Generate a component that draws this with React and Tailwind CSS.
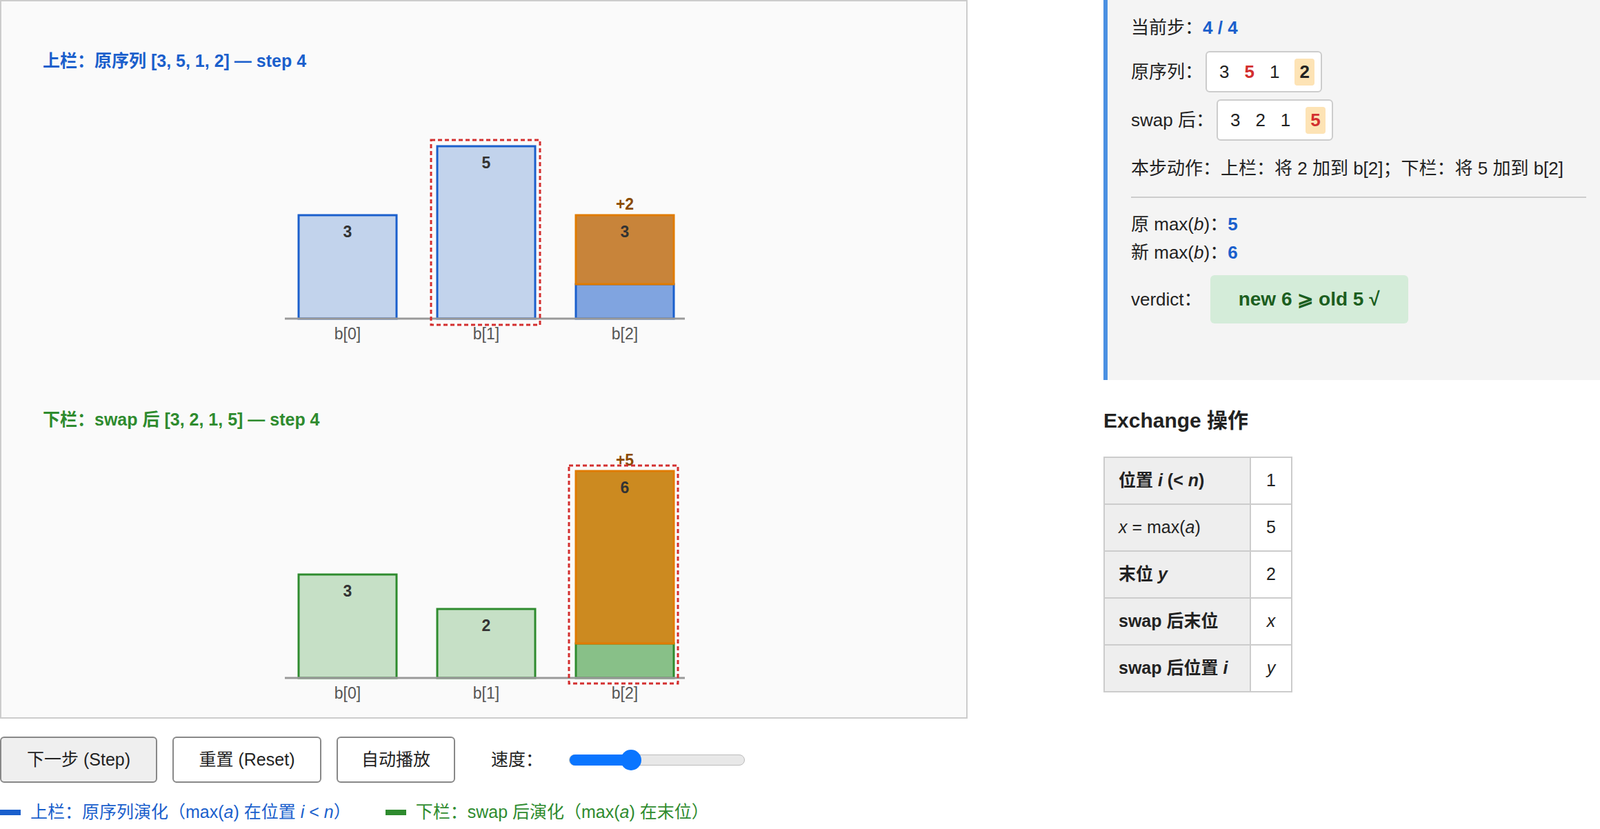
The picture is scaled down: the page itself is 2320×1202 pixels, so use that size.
import React from "react";

const sans = { fontFamily: '"Liberation Sans", "Noto Sans CJK SC", sans-serif' };
const M = ({ children }) => <span className="font-['Liberation_Serif'] italic">{children}</span>;
const R = ({ children }) => <span className="font-['Liberation_Serif']">{children}</span>;

const U = 50;

const Chart = ({ axisY, bars, highlight }) => (
  <svg width="1400" height={axisY + 50} className="block">
    {bars.map((b, i) => {
      const x = 431 + i * 201;
      const base = b.base * U;
      const add = (b.add || 0) * U;
      const top = axisY - base - add;
      return (
        <g key={i}>
          <rect x={x} y={axisY - base} width="142" height={base} fill={b.add ? b.dark : b.fill} stroke={b.stroke} strokeWidth="3" />
          {b.add ? (
            <rect x={x} y={top} width="142" height={add} fill={b.addFill} stroke="#e07b00" strokeWidth="3" />
          ) : null}
          <text x={x + 71} y={top + 32} textAnchor="middle" fontSize="23" fontWeight="bold" fill="#333" style={sans}>{b.label}</text>
          {b.add ? (
            <text x={x + 71} y={top - 8} textAnchor="middle" fontSize="23" fontWeight="bold" fill="#8a4a00" style={sans}>+{b.add}</text>
          ) : null}
          <text x={x + 71} y={axisY + 30} textAnchor="middle" fontSize="23" fill="#555" style={sans}>b[{i}]</text>
        </g>
      );
    })}
    <line x1="411" x2="991" y1={axisY} y2={axisY} stroke="#999" strokeWidth="3" />
    <rect x={highlight.x} y={highlight.y} width={highlight.w} height={highlight.h} fill="none" stroke="#d32f2f" strokeWidth="3" strokeDasharray="6 4" />
  </svg>
);

export default function App() {
  const blue = { fill: "#c2d3ec", stroke: "#1a5fcc", dark: "#80a4e0" };
  const green = { fill: "#c6e0c6", stroke: "#2e8b2e", dark: "#88c088" };
  return (
    <div className="w-[2320px] h-[1202px] bg-white text-[#222] flex" style={sans}>
      <div className="w-[1403px] flex flex-col">
        <div className="h-[1042px] border-2 border-[#ccc] bg-[#fafafa] flex flex-col">
          <div className="h-[130px] pl-[60px] pt-[68px] text-[25px] font-bold text-[#1a5fcc]">上栏：原序列 [3, 5, 1, 2] — step 4</div>
          <Chart axisY={330} bars={[{ ...blue, base: 3, label: 3 }, { ...blue, base: 5, label: 5 }, { ...blue, base: 1, add: 2, addFill: "#c8843a", label: 3 }]} highlight={{ x: 623, y: 71, w: 158, h: 268 }} />
          <div className="h-[130px] pl-[60px] pt-[78px] text-[25px] font-bold text-[#2e8b2e]">下栏：swap 后 [3, 2, 1, 5] — step 4</div>
          <Chart axisY={341} bars={[{ ...green, base: 3, label: 3 }, { ...green, base: 2, label: 2 }, { ...green, base: 1, add: 5, addFill: "#cc8a20", label: 6 }]} highlight={{ x: 823, y: 33, w: 158, h: 316 }} />
        </div>
        <div className="flex items-center gap-[22px] mt-[26px] text-[25px]">
          <button className="w-[228px] h-[67px] rounded-[6px] border-2 border-[#888] bg-[#efefef]">下一步 (Step)</button>
          <button className="w-[216px] h-[67px] rounded-[6px] border-2 border-[#888] bg-white">重置 (Reset)</button>
          <button className="w-[172px] h-[67px] rounded-[6px] border-2 border-[#888] bg-white">自动播放</button>
          <span className="ml-[30px]">速度：</span>
          <div className="ml-[16px] relative w-[255px] h-[16px] rounded-full bg-[#e8e8e8] border border-[#bbb]">
            <div className="absolute left-0 top-[-1px] h-[16px] w-[90px] rounded-full bg-[#0a75ff]" />
            <div className="absolute left-[74px] top-[-8px] w-[30px] h-[30px] rounded-full bg-[#0a75ff]" />
          </div>
        </div>
        <div className="flex items-center mt-[24px] text-[25px]">
          <span className="w-[30px] h-[8px] bg-[#1a5fcc]" />
          <span className="ml-[14px] text-[#1a5fcc]">上栏：原序列演化（<R>max</R>(<M>a</M>) 在位置 <M>i</M> &lt; <M>n</M>）</span>
          <span className="ml-[50px] w-[30px] h-[8px] bg-[#2e8b2e]" />
          <span className="ml-[14px] text-[#2e8b2e]">下栏：swap 后演化（<R>max</R>(<M>a</M>) 在末位）</span>
        </div>
      </div>
      <div className="ml-[197px] flex-1 flex flex-col">
        <div className="h-[551px] bg-[#f4f4f4] border-l-[6px] border-[#4a90e2] pl-[34px] pr-[20px] pt-[20px] text-[26px]">
          <div className="h-[40px] flex items-center">当前步：<span className="text-[#1a5fcc] font-bold">4 / 4</span></div>
          <div className="mt-[14px] flex items-center">原序列：
            <span className="ml-[4px] h-[60px] w-[169px] flex items-center gap-[22px] px-[18px] bg-white border-2 border-[#ccc] rounded-[6px]">
              <span>3</span><span className="text-[#d32f2f] font-bold">5</span><span>1</span><span className="bg-[#fde3b5] font-bold px-[7px] rounded">2</span>
            </span>
          </div>
          <div className="mt-[10px] flex items-center">swap 后：
            <span className="ml-[4px] h-[60px] w-[169px] flex items-center gap-[22px] px-[18px] bg-white border-2 border-[#ccc] rounded-[6px]">
              <span>3</span><span>2</span><span>1</span><span className="bg-[#fde3b5] text-[#d32f2f] font-bold px-[7px] rounded">5</span>
            </span>
          </div>
          <div className="mt-[20px] leading-[41px] pr-[20px]">本步动作：上栏：将 2 加到 b[2]；下栏：将 5 加到 b[2]</div>
          <div className="mt-[20px] h-[2px] bg-[#ccc]" />
          <div className="mt-[18px] leading-[41px]">原 <R>max</R>(<M>b</M>)：<span className="text-[#1a5fcc] font-bold">5</span></div>
          <div className="leading-[41px]">新 <R>max</R>(<M>b</M>)：<span className="text-[#1a5fcc] font-bold">6</span></div>
          <div className="mt-[12px] flex items-center">verdict：
            <span className="ml-[12px] h-[70px] w-[287px] flex items-center justify-center rounded-[6px] bg-[#d4ecd9] text-[#1b5e20] font-bold text-[28px]">new 6 ⩾ old 5 √</span>
          </div>
        </div>
        <div className="mt-[36px] text-[30px] font-bold">Exchange 操作</div>
        <table className="mt-[30px] border-collapse text-[25px] w-[274px]">
          <tbody>
            {[
              [<span className="font-bold">位置 <M>i</M> (&lt; <M>n</M>)</span>, "1"],
              [<span><M>x</M> = <R>max</R>(<M>a</M>)</span>, "5"],
              [<span className="font-bold">末位 <M>y</M></span>, "2"],
              [<span className="font-bold">swap 后末位</span>, <M>x</M>],
              [<span className="font-bold">swap 后位置 <M>i</M></span>, <M>y</M>],
            ].map((r, i) => (
              <tr key={i} className="h-[68px]">
                <td className="border-2 border-[#ccc] bg-[#eee] px-[20px] w-[212px] whitespace-nowrap">{r[0]}</td>
                <td className="border-2 border-[#ccc] bg-white text-center">{r[1]}</td>
              </tr>
            ))}
          </tbody>
        </table>
      </div>
    </div>
  );
}
